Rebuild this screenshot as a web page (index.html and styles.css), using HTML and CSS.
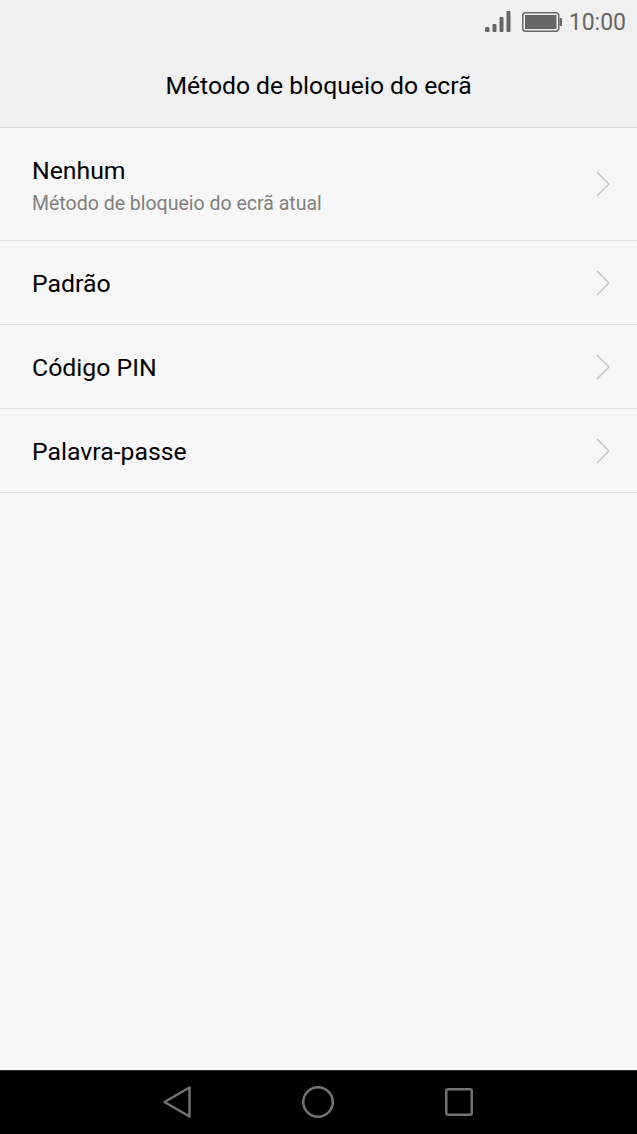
FILE: index.html
```html
<!DOCTYPE html>
<html lang="pt">
<head>
    <meta charset="UTF-8">
    <meta name="viewport" content="width=device-width, initial-scale=1.0">
    <title>Método de bloqueio do ecrã</title>
    <link rel="stylesheet" href="styles.css">
</head>
<body>
    <header class="top">
        <div class="status">
            <svg class="signal" width="26" height="22" viewBox="0 0 26 22">
                <rect x="0" y="16" width="4.5" height="5" rx="1.5"/>
                <rect x="7.5" y="13" width="4" height="8" rx="1"/>
                <rect x="14.5" y="6" width="4" height="15" rx="1"/>
                <rect x="21.5" y="0" width="4" height="21" rx="1"/>
            </svg>
            <svg class="battery" width="40" height="20" viewBox="0 0 40 20">
                <rect x="0.75" y="0.75" width="36" height="18.5" rx="3" class="battery-shell"/>
                <rect x="3" y="3" width="31.5" height="14" class="battery-fill"/>
                <rect x="37.5" y="6" width="2.5" height="8" rx="1" class="battery-fill"/>
            </svg>
            <span class="clock">10:00</span>
        </div>
        <h1 class="title">Método de bloqueio do ecrã</h1>
    </header>
    <main class="list">
        <a class="row row-tall" href="#">
            <div>
                <div class="row-title">Nenhum</div>
                <div class="row-sub">Método de bloqueio do ecrã atual</div>
            </div>
            <svg class="chev" width="14" height="26" viewBox="0 0 14 26"><path d="M1 1 L13 13 L1 25"/></svg>
        </a>
        <a class="row" href="#">
            <div class="row-title">Padrão</div>
            <svg class="chev" width="14" height="26" viewBox="0 0 14 26"><path d="M1 1 L13 13 L1 25"/></svg>
        </a>
        <a class="row" href="#">
            <div class="row-title">Código PIN</div>
            <svg class="chev" width="14" height="26" viewBox="0 0 14 26"><path d="M1 1 L13 13 L1 25"/></svg>
        </a>
        <a class="row" href="#">
            <div class="row-title">Palavra-passe</div>
            <svg class="chev" width="14" height="26" viewBox="0 0 14 26"><path d="M1 1 L13 13 L1 25"/></svg>
        </a>
    </main>
    <nav class="navbar">
        <svg width="28" height="32" viewBox="0 0 28 32"><path d="M26.5 1.5 L26.5 30.5 L1.5 16 Z"/></svg>
        <svg width="32" height="32" viewBox="0 0 32 32"><circle cx="16" cy="16" r="14.75"/></svg>
        <svg width="28" height="28" viewBox="0 0 28 28"><rect x="1.25" y="1.25" width="25.5" height="25.5" rx="2"/></svg>
    </nav>
</body>
</html>
```

FILE: styles.css
```css
* {
    box-sizing: border-box;
}

html, body {
    height: 100%;
}

body {
    margin: 0;
    display: flex;
    flex-direction: column;
    background-color: #f7f7f7;
    font-family: 'Roboto', 'Liberation Sans', sans-serif;
    overflow: hidden;
}

/* cabecalho */
.top {
    height: 128px;
    background-color: #f0f0f0;
    border-bottom: 1px solid #d6d6d6;
    flex-shrink: 0;
}

.status {
    height: 44px;
    padding-right: 11px;
    display: flex;
    justify-content: flex-end;
    align-items: center;
}

.signal {
    fill: #666;
    margin-right: 11px;
}

.battery {
    margin-right: 7px;
}

.battery-shell {
    fill: none;
    stroke: #666;
    stroke-width: 1.5;
}

.battery-fill {
    fill: #666;
}

.clock {
    font-size: 23px;
    color: #666;
}

.title {
    margin: 0;
    padding-top: 26px;
    text-align: center;
    font-size: 24.7px;
    line-height: 32px;
    font-weight: 400;
    color: #000;
}

/* lista */
.list {
    flex: 1;
}

.row {
    height: 84px;
    padding: 0 27px 0 32px;
    display: flex;
    justify-content: space-between;
    align-items: center;
    border-bottom: 1px solid #e2e2e2;
    text-decoration: none;
}

.row-tall {
    height: 113px;
}

.row-title {
    padding-top: 2px;
    font-size: 24.8px;
    line-height: 34px;
    color: #000;
}

.row-sub {
    margin-top: 3px;
    font-size: 19.5px;
    line-height: 26px;
    color: #808080;
}

.chev {
    fill: none;
    stroke: #c4c4c4;
    stroke-width: 1.5;
}

/* barra de navegacao */
.navbar {
    height: 64px;
    padding: 0 2px 2px 0;
    flex-shrink: 0;
    background-color: #000;
    border-top: 1px solid #333;
    display: flex;
    justify-content: center;
    align-items: center;
    gap: 111px;
}

.navbar svg {
    fill: none;
    stroke: #737373;
    stroke-width: 2.5;
    stroke-linejoin: round;
}
```
